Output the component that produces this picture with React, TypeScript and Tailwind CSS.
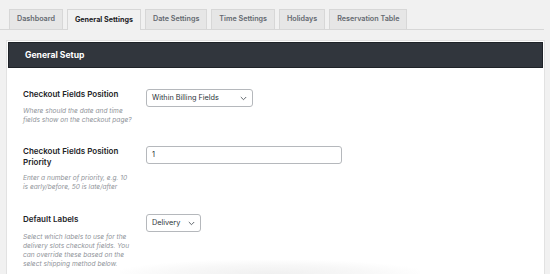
import React from "react";

const tabs = [
  { label: "Dashboard", active: false },
  { label: "General Settings", active: true },
  { label: "Date Settings", active: false },
  { label: "Time Settings", active: false },
  { label: "Holidays", active: false },
  { label: "Reservation Table", active: false },
];

function Chevron() {
  return (
    <svg width="7" height="5" viewBox="0 0 7 5" fill="none">
      <path d="M0.8 1 L3.5 3.7 L6.2 1" stroke="#50575e" strokeWidth="0.9" />
    </svg>
  );
}

export default function App() {
  return (
    <div
      className="relative w-[550px] h-[274px] overflow-hidden bg-[#f1f1f1] text-[#1d2327]"
      style={{ fontFamily: "Inter, 'Noto Sans', sans-serif" }}
    >
      {/* Tabs */}
      <div className="flex items-end gap-[4px] pl-[9px] pt-[9px] mr-[6px] border-b border-[#d7d7d7]">
        {tabs.map((t) => (
          <div
            key={t.label}
            className={
              t.active
                ? "h-[21px] -mb-px px-[7px] flex items-center bg-[#f1f1f1] border border-b-0 border-[#d7d7d7] text-[7.2px] font-bold text-[#1d2327]"
                : "h-[20px] px-[7px] flex items-center bg-[#e6e6e6] border border-b-0 border-[#d7d7d7] text-[7.2px] font-semibold text-[#646970]"
            }
          >
            {t.label}
          </div>
        ))}
      </div>

      {/* Panel */}
      <div className="mt-[10px] ml-[6px] mr-[5px] bg-white border border-[#e2e2e2] h-[300px]">
        <div className="h-[26px] mx-px mt-px bg-[#31363d] border border-[#1f2328] flex items-center pl-[16px] text-white text-[8.6px] font-bold">
          General Setup
        </div>

        <div className="pt-[21px] pl-[16px]">
          {/* Row 1 */}
          <div className="flex">
            <div className="w-[123px]">
              <div className="text-[8px] leading-[11px] font-semibold">Checkout Fields Position</div>
              <div className="mt-[7px] whitespace-nowrap text-[6.6px] leading-[9px] italic text-[#8f9399]">
                Where should the date and time
                <br />
                fields show on the checkout page?
              </div>
            </div>
            <div className="w-[107px] h-[18px] rounded-[3px] border border-[#b5b8bc] flex items-center justify-between pl-[5px] pr-[5px] text-[7.3px] text-[#2c3338]">
              <span>Within Billing Fields</span>
              <Chevron />
            </div>
          </div>

          {/* Row 2 */}
          <div className="flex mt-[21px]">
            <div className="w-[123px]">
              <div className="text-[8px] leading-[11px] font-semibold w-[100px]">
                Checkout Fields Position Priority
              </div>
              <div className="mt-[6px] whitespace-nowrap text-[6.6px] leading-[9px] italic text-[#8f9399]">
                Enter a number of priority, e.g. 10
                <br />
                is early/before, 50 is late/after
              </div>
            </div>
            <div className="w-[196px] h-[18px] rounded-[3px] border border-[#b5b8bc] flex items-center pl-[5px] text-[7.3px] text-[#2c3338]">
              1
            </div>
          </div>

          {/* Row 3 */}
          <div className="flex mt-[22px]">
            <div className="w-[123px]">
              <div className="text-[8px] leading-[11px] font-semibold">Default Labels</div>
              <div className="mt-[8px] whitespace-nowrap text-[6.6px] leading-[9px] italic text-[#8f9399]">
                Select which labels to use for the
                <br />
                delivery slots checkout fields. You
                <br />
                can override these based on the
                <br />
                select shipping method below.
              </div>
            </div>
            <div className="w-[55px] h-[18px] rounded-[3px] border border-[#b5b8bc] flex items-center justify-between pl-[5px] pr-[5px] text-[7.3px] text-[#2c3338]">
              <span>Delivery</span>
              <Chevron />
            </div>
          </div>
        </div>
      </div>

      {/* bottom soft shadow */}
      <div className="pointer-events-none absolute left-[120px] bottom-0 w-[300px] h-[14px] bg-[radial-gradient(ellipse_at_bottom,#f0f0f0_0%,rgba(240,240,240,0.5)_45%,rgba(255,255,255,0)_75%)]" />
    </div>
  );
}
